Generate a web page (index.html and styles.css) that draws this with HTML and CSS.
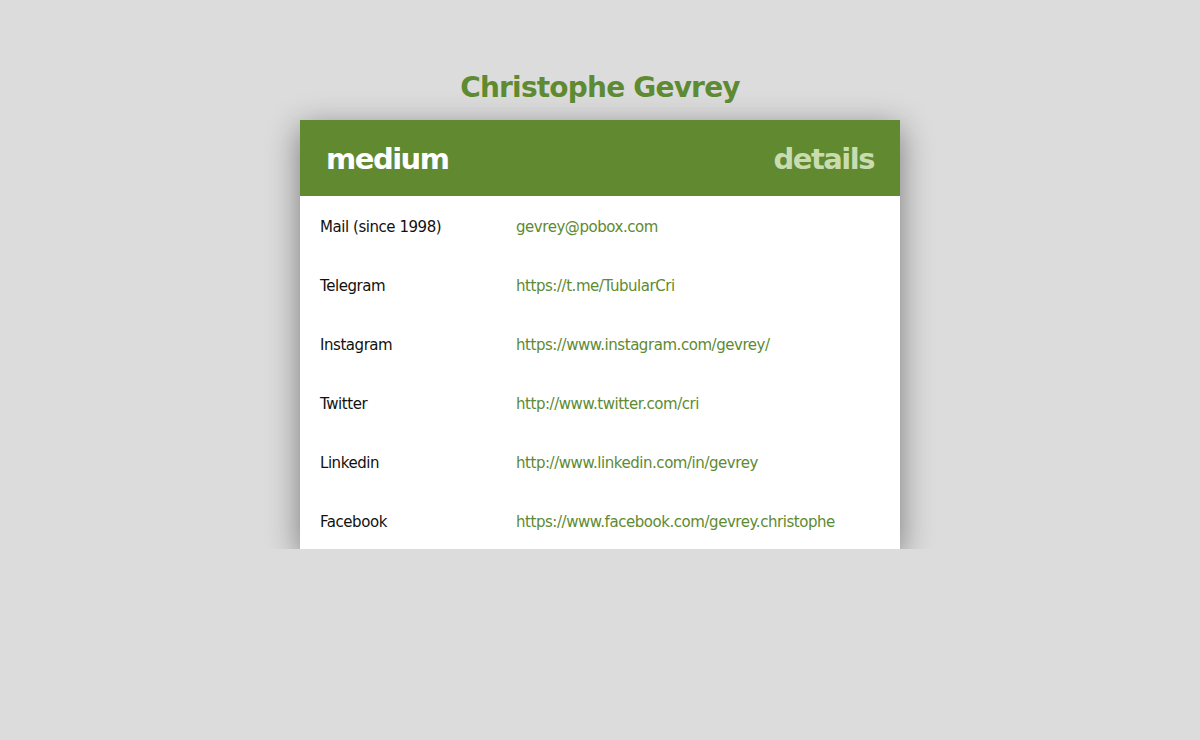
FILE: index.html
```html
<!DOCTYPE html>
<html>
<head>
<meta charset="utf-8">
<title>Christophe Gevrey</title>
<link rel="stylesheet" href="styles.css">
</head>
<body>
<h1 class="name">Christophe Gevrey</h1>
<div class="card">
  <div class="card-head">
    <span class="head-left">medium</span>
    <span class="head-right">details</span>
  </div>
  <div class="rows">
    <div class="row"><span class="label">Mail (since 1998)</span><a class="link" href="#">gevrey@pobox.com</a></div>
    <div class="row"><span class="label">Telegram</span><a class="link" href="#">https://t.me/TubularCri</a></div>
    <div class="row"><span class="label">Instagram</span><a class="link" href="#">https://www.instagram.com/gevrey/</a></div>
    <div class="row"><span class="label">Twitter</span><a class="link" href="#">http://www.twitter.com/cri</a></div>
    <div class="row"><span class="label">Linkedin</span><a class="link" href="#">http://www.linkedin.com/in/gevrey</a></div>
    <div class="row"><span class="label">Facebook</span><a class="link" href="#">https://www.facebook.com/gevrey.christophe</a></div>
  </div>
</div>
</body>
</html>
```

FILE: styles.css
```css
html, body {
  margin: 0;
  padding: 0;
}
body {
  background: #dcdcdc;
  font-family: "DejaVu Sans", Verdana, sans-serif;
  color: #111;
  padding-top: 67px;
}
.name {
  margin: 0 0 11px;
  text-align: center;
  font-size: 28px;
  line-height: 42px;
  font-weight: bold;
  letter-spacing: -0.8px;
  color: #5e8a31;
}
.card {
  width: 600px;
  margin: 0 auto;
  background: #fff;
  box-shadow: 0 8px 30px rgba(0, 0, 0, 0.45);
}
.card-head {
  background: #618930;
  height: 76px;
  display: flex;
  align-items: center;
  justify-content: space-between;
  padding: 2px 26px 0;
  box-sizing: border-box;
  font-size: 29px;
  font-weight: bold;
  letter-spacing: -1.5px;
}
.head-left { color: #fff; }
.head-right {
  color: #c8dcb0;
}
.rows {
  display: flex;
  flex-direction: column;
}
.row {
  height: 59px;
  box-sizing: border-box;
  padding: 2px 0 0 20px;
  display: grid;
  grid-template-columns: 196px 1fr;
  align-items: center;
  font-size: 15px;
  letter-spacing: -0.45px;
}
.row:last-child { height: 58px; padding-top: 3px; }
.link {
  color: #5e8a31;
  text-decoration: none;
}
```
